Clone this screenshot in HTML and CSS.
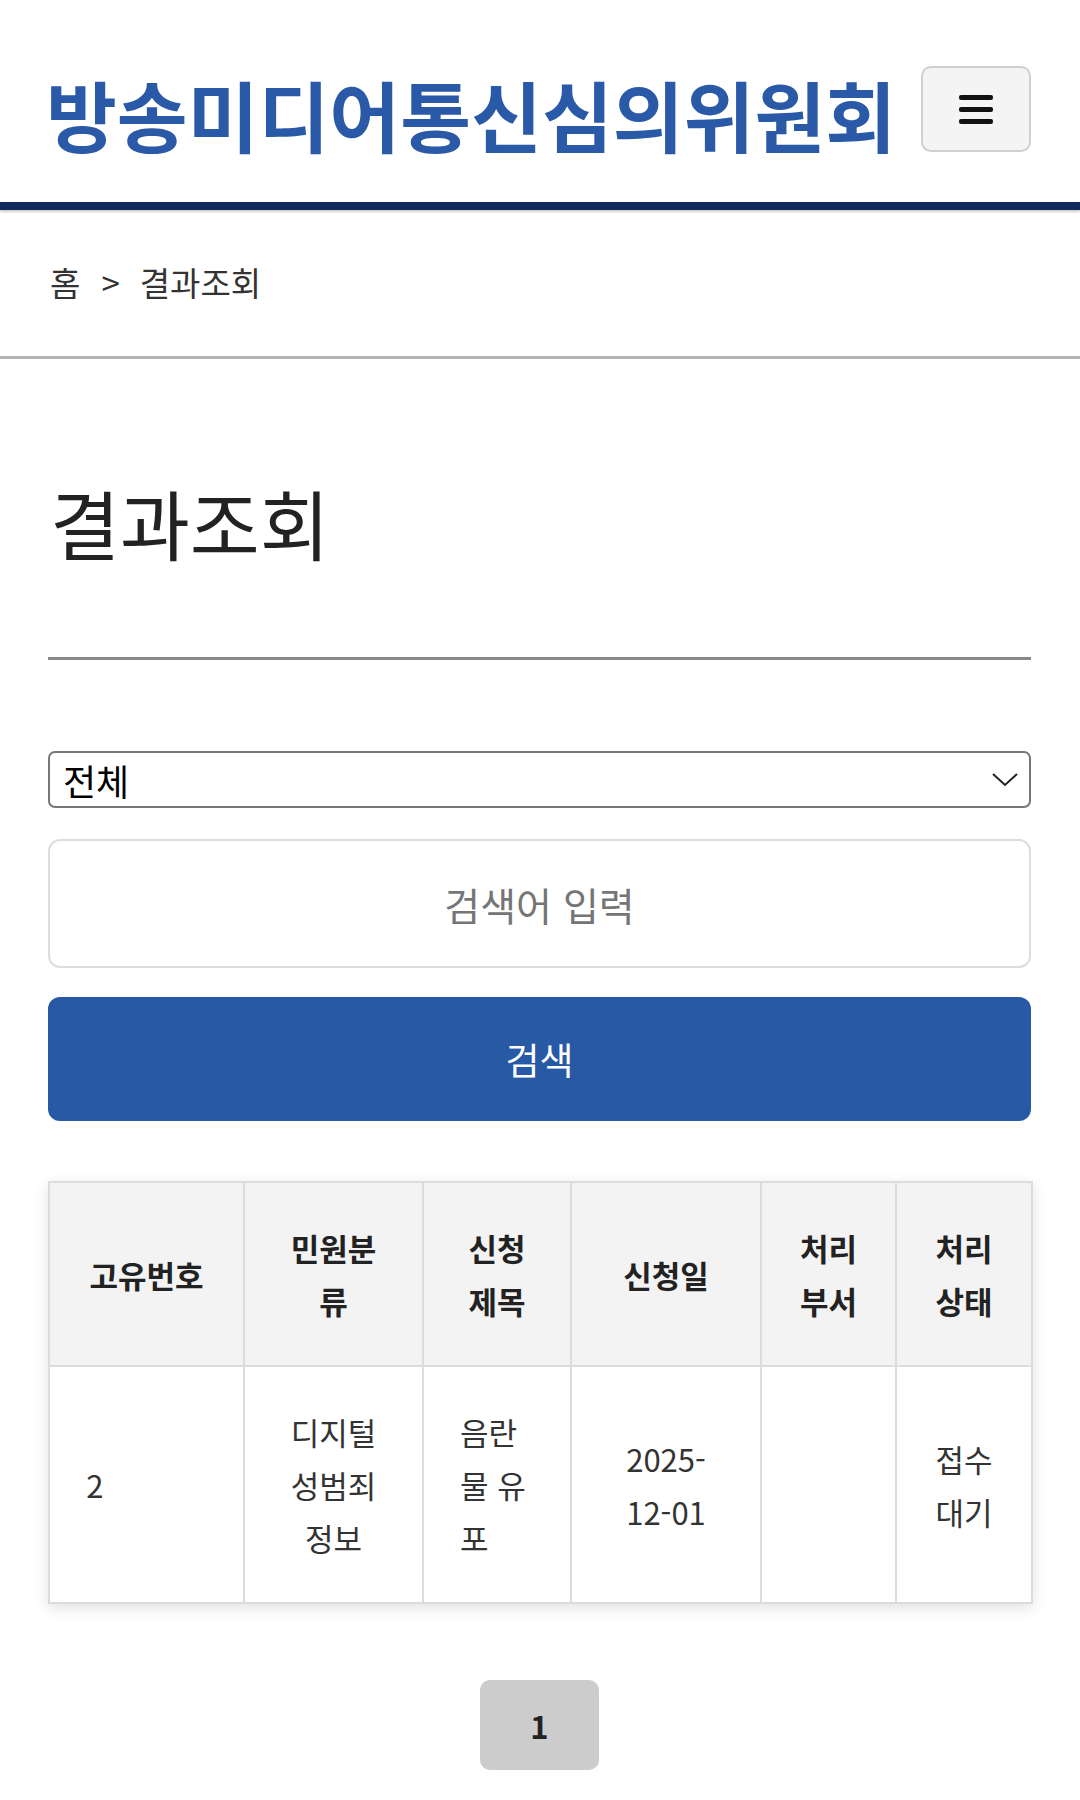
FILE: index.html
```html
<!DOCTYPE html>
<html lang="ko">
<head>
    <meta charset="UTF-8">
    <meta name="viewport" content="width=device-width, initial-scale=1.0">
    <title>결과조회 - 방송미디어통신심의위원회</title>
    <link rel="stylesheet" href="styles.css">
</head>
<body>
    <header class="site-header">
        <h1 class="site-title">방송미디어통신심의위원회</h1>
        <button type="button" class="menu-btn" aria-label="메뉴">
            <span></span><span></span><span></span>
        </button>
    </header>
    <nav class="breadcrumb">
        <span>홈</span><span class="sep">&gt;</span><span>결과조회</span>
    </nav>
    <main class="content">
        <h2 class="page-title">결과조회</h2>
        <form class="search-form" onsubmit="return false;">
            <div class="select-wrap">
                <select class="search-select">
                    <option>전체</option>
                    <option>고유번호</option>
                    <option>신청제목</option>
                </select>
                <svg class="select-arrow" width="26" height="14" viewBox="0 0 26 14">
                    <polyline points="1,1 13,12 25,1" fill="none" stroke="#222" stroke-width="2"/>
                </svg>
            </div>
            <input type="text" class="search-input" placeholder="검색어 입력">
            <button type="submit" class="search-btn">검색</button>
        </form>
        <table class="result-table">
            <colgroup>
                <col style="width:195px">
                <col style="width:179px">
                <col style="width:148px">
                <col style="width:190px">
                <col style="width:135px">
                <col style="width:136px">
            </colgroup>
            <thead>
                <tr>
                    <th>고유번호</th>
                    <th>민원분류</th>
                    <th>신청제목</th>
                    <th>신청일</th>
                    <th>처리부서</th>
                    <th>처리상태</th>
                </tr>
            </thead>
            <tbody>
                <tr>
                    <td class="no">2<span class="masked">025120</span></td>
                    <td>디지털 성범죄 정보</td>
                    <td class="subject">음란물 유포</td>
                    <td>2025-12-01</td>
                    <td></td>
                    <td>접수 대기</td>
                </tr>
            </tbody>
        </table>
        <div class="pagination">
            <a class="page current">1</a>
        </div>
    </main>
</body>
</html>
```

FILE: styles.css
```css
body {
    margin: 0;
    font-family: "Noto Sans CJK KR", "Noto Sans", sans-serif;
    color: #222;
    background: #fff;
}
.site-header {
    display: flex;
    justify-content: space-between;
    align-items: center;
    padding: 66px 49px 50px 46px;
    border-bottom: 8px solid #122b5e;
    box-shadow: 0 2px 2px rgba(0, 0, 0, 0.2);
}
.site-title {
    align-self: flex-end;
    margin: 0;
    font-size: 77px;
    line-height: 76px;
    font-weight: bold;
    color: #2a5aa7;
    white-space: nowrap;
}
.menu-btn {
    box-sizing: border-box;
    width: 110px;
    height: 86px;
    display: flex;
    flex-direction: column;
    align-items: center;
    justify-content: center;
    gap: 7px;
    padding: 0;
    background: #f4f4f4;
    border: 2px solid #cfcfcf;
    border-radius: 10px;
}
.menu-btn span {
    display: block;
    width: 34px;
    height: 5px;
    background: #111;
    border-radius: 2px;
}
.breadcrumb {
    padding: 50px 50px 51px;
    font-size: 33px;
    line-height: 45px;
    color: #333;
    border-bottom: 3px solid #b3b3b3;
}
.breadcrumb .sep {
    margin: 0 20px 0 21px;
}
.content {
    padding: 0 49px 60px 48px;
}
.page-title {
    margin: 122px 0 0;
    padding: 0 0 94px 2px;
    font-size: 76px;
    line-height: 82px;
    font-weight: normal;
    color: #222;
    border-bottom: 3px solid #888;
}
.search-form {
    display: flex;
    flex-direction: column;
}
.select-wrap {
    position: relative;
    margin-top: 91px;
}
.search-select {
    box-sizing: border-box;
    width: 100%;
    height: 57px;
    padding: 0 50px 0 13px;
    font-family: inherit;
    font-size: 36px;
    color: #000;
    background: #fff;
    border: 2px solid #777;
    border-radius: 7px;
    appearance: none;
    -webkit-appearance: none;
}
.select-arrow {
    position: absolute;
    right: 13px;
    top: 22px;
    pointer-events: none;
}
.search-input {
    box-sizing: border-box;
    width: 100%;
    height: 129px;
    margin-top: 31px;
    font-family: inherit;
    font-size: 39px;
    text-align: center;
    border: 2px solid #ddd;
    border-radius: 12px;
    outline: none;
}
.search-input::placeholder {
    color: #757575;
}
.search-btn {
    height: 124px;
    margin-top: 29px;
    font-family: inherit;
    font-size: 37px;
    color: #fff;
    background: #2759a4;
    border: none;
    border-radius: 12px;
}
.result-table {
    width: 100%;
    margin-top: 60px;
    table-layout: fixed;
    border-collapse: collapse;
    box-shadow: 0 4px 14px rgba(0, 0, 0, 0.12);
}
.result-table th,
.result-table td {
    padding: 38px 36px;
    font-size: 31px;
    line-height: 53px;
    text-align: center;
    vertical-align: middle;
    border: 2px solid #dcdcdc;
}
.result-table th {
    background: #f3f3f3;
    font-weight: bold;
    color: #222;
}
.result-table td {
    color: #333;
}
.result-table td.no {
    white-space: nowrap;
    padding: 38px 10px;
}
.result-table td.subject {
    text-align: left;
}
.masked {
    color: #fff;
}
.pagination {
    display: flex;
    justify-content: center;
    margin-top: 76px;
}
.page {
    width: 119px;
    height: 90px;
    display: flex;
    align-items: center;
    justify-content: center;
    font-size: 31px;
    font-weight: bold;
    color: #222;
    background: #ccc;
    border-radius: 10px;
}
```
